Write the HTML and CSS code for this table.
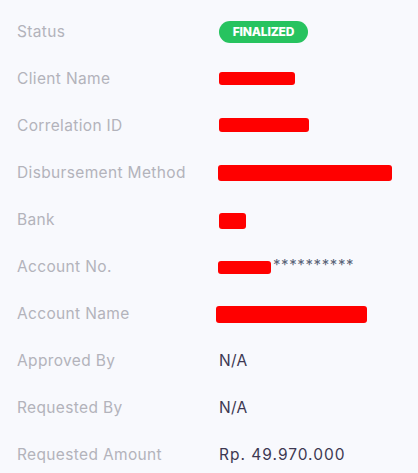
FILE: index.html
```html
<!DOCTYPE html>
<html>
<head>
<meta charset="utf-8">
<title>Disbursement Detail</title>
<link rel="stylesheet" href="styles.css">
</head>
<body>
<div class="DetailList">
   <div class="Label">Status</div>
   <div class="Value"><span class="Badge">FINALIZED</span></div>

   <div class="Label">Client Name</div>
   <div class="Value"><span class="Redact ClientName"></span></div>

   <div class="Label">Correlation ID</div>
   <div class="Value"><span class="Redact CorrelationId"></span></div>

   <div class="Label">Disbursement Method</div>
   <div class="Value"><span class="Redact Method"></span></div>

   <div class="Label">Bank</div>
   <div class="Value"><span class="Redact BankName"></span></div>

   <div class="Label">Account No.</div>
   <div class="Value"><span class="Redact AccountNo"></span><span class="Stars">**********</span></div>

   <div class="Label">Account Name</div>
   <div class="Value"><span class="Redact AccountName"></span></div>

   <div class="Label">Approved By</div>
   <div class="Value">N/A</div>

   <div class="Label">Requested By</div>
   <div class="Value">N/A</div>

   <div class="Label">Requested Amount</div>
   <div class="Value Amount">Rp. 49.970.000</div>
</div>
</body>
</html>
```

FILE: styles.css
```css
body
{
   margin:     0;
   background: #f8f9fd;
   font-family: Inter, "Noto Sans", sans-serif;
}
.DetailList
{
   display: grid;
   grid-template-columns: 202px auto;
   grid-auto-rows: 47px;
   padding: 8px 0 0 17px;
}
.Label, .Value
{
   display:        flex;
   align-items:    center;
   font-size:      15.5px;
   letter-spacing: 0.35px;
}
.Label
{
   color: #b3b3bb;
}
.Value
{
   color: #3d3852;
}
.Amount
{
   letter-spacing: 1px;
}
.Badge
{
   background:     #27c35f;
   color:          #ffffff;
   font-size:      12px;
   font-weight:    800;
   letter-spacing: -0.2px;
   border-radius:  11px;
   line-height:    22px;
   width:          89px;
   text-align:     center;
}
.Redact
{
   display:       inline-block;
   background:    #ff0000;
   border-radius: 3px;
}
.ClientName    { width: 76px;  height: 13px; margin-top: -1px; }
.CorrelationId { width: 90px;  height: 14px; margin-top: -2px; }
.Method        { width: 174px; height: 16px; margin-left: -1px; }
.BankName      { width: 27px;  height: 16px; margin-top: 2px; }
.AccountNo     { width: 53px;  height: 13px; margin-top: 2px; margin-left: -1px; }
.AccountName   { width: 151px; height: 17px; margin-top: 1px; margin-left: -3px; }
.Stars
{
   color:          #5a6478;
   font-size:      15px;
   letter-spacing: 0.6px;
   margin-top:     -4px;
   margin-left:    2px;
}
```
